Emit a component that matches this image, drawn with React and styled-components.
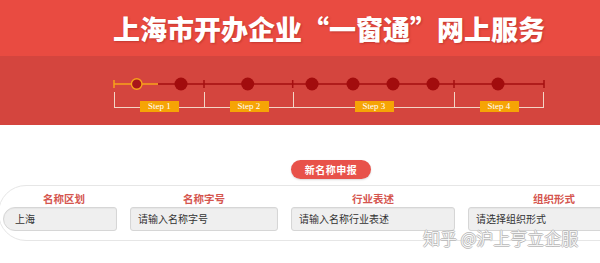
import React from "react";
import styled, { createGlobalStyle } from "styled-components";

const GlobalStyle = createGlobalStyle`
  html, body {
    margin: 0;
    padding: 0;
    background: #fff;
    overflow: hidden;
  }
  body {
    width: 600px;
    font-family: "Noto Sans CJK SC", "Noto Sans", sans-serif;
  }
`;

const Page = styled.div`
  width: 600px;
  height: 263px;
  overflow: hidden;
`;

const TitleBar = styled.div`
  height: 56px;
  background: #e94b41;
  display: flex;
  align-items: center;
  padding-left: 113px;
  box-sizing: border-box;
`;

const Title = styled.h1`
  margin: 0;
  font-size: 27px;
  line-height: 1;
  font-weight: 900;
  color: #fff;
  white-space: nowrap;
  text-shadow: 1px 1px 2px rgba(120, 20, 15, 0.35);
`;

const ProgressBar = styled.div`
  height: 69px;
  background: #d4453e;
  padding: 20px 0 0 113px;
  box-sizing: border-box;
`;

const Track = styled.svg`
  display: block;
`;

const Steps = styled.div`
  display: flex;
  margin-left: 1px;
  height: 16px;
`;

const Segment = styled.div`
  width: ${(p) => p.$w}px;
  box-sizing: border-box;
  border-left: 1px solid #f4d5c6;
  border-bottom: 1px solid #f4d5c6;
  border-right: ${(p) => (p.$last ? "1px solid #f4d5c6" : "none")};
  display: flex;
  justify-content: center;
  align-items: flex-end;
`;

const StepTag = styled.span`
  width: 39px;
  height: 11px;
  margin-bottom: -5px;
  background: #f6a405;
  color: #fff;
  font-family: "Liberation Serif", serif;
  font-size: 9px;
  line-height: 11px;
  text-align: center;
`;

const Main = styled.div`
  position: relative;
  padding-top: 35px;
`;

const PillRow = styled.div`
  display: flex;
  padding-left: 291px;
`;

const Pill = styled.div`
  width: 80px;
  height: 19px;
  border-radius: 10px;
  background: #e8524a;
  color: #fff;
  font-size: 10px;
  font-weight: 700;
  line-height: 19px;
  text-align: center;
  letter-spacing: 0.5px;
  box-shadow: 0 1px 2px rgba(0, 0, 0, 0.15);
`;

const FormCard = styled.div`
  margin: 6px 0 0 -2px;
  width: 680px;
  box-sizing: border-box;
  border: 1px solid #e6e6e6;
  border-radius: 28px;
  padding: 6px 0 9px 4px;
`;

const Fields = styled.div`
  display: grid;
  grid-template-columns: 114px 148px 164px 172px;
  column-gap: 13px;
`;

const Field = styled.div`
  display: flex;
  flex-direction: column;
  align-items: center;
  gap: 1px;
`;

const Label = styled.div`
  height: 14px;
  line-height: 14px;
  font-size: 10.5px;
  font-weight: 700;
  color: #d5564f;
  padding-left: ${(p) => (p.$first ? "8px" : "0")};
`;

const Input = styled.div`
  width: 100%;
  height: 24px;
  box-sizing: border-box;
  border: 1px solid #d6d6d6;
  border-radius: ${(p) => (p.$first ? "12px 3px 3px 12px" : "3px")};
  background: #efefef;
  color: #333;
  font-size: 10px;
  line-height: 22px;
  padding-left: ${(p) => (p.$first ? "11px" : "7px")};
  white-space: nowrap;
  box-shadow: inset 0 1px 1px rgba(0, 0, 0, 0.04);
`;

const Watermark = styled.div`
  position: absolute;
  left: 423px;
  top: 104px;
  font-size: 17px;
  font-weight: 300;
  line-height: 1;
  color: #fff;
  white-space: nowrap;
  text-shadow: 1px 0 0 #b8b8b8, -1px 0 0 #b8b8b8, 0 1px 0 #b8b8b8, 0 -1px 0 #b8b8b8;
`;

const segments = [
  { w: 90, label: "Step 1" },
  { w: 89, label: "Step 2" },
  { w: 161, label: "Step 3" },
  { w: 90, label: "Step 4" },
];

const dots = [68, 134.7, 199, 240, 280, 320, 385];
const ticks = [91, 179.7, 341, 431];

const fields = [
  { label: "名称区划", value: "上海" },
  { label: "名称字号", value: "请输入名称字号" },
  { label: "行业表述", value: "请输入名称行业表述" },
  { label: "组织形式", value: "请选择组织形式" },
];

export default function App() {
  return (
    <Page>
      <GlobalStyle />
      <TitleBar>
        <Title>上海市开办企业“一窗通”网上服务</Title>
      </TitleBar>
      <ProgressBar>
        <Track width="434" height="16" viewBox="0 0 434 16">
          <line x1="45" y1="8" x2="431" y2="8" stroke="#a50f10" strokeWidth="1.5" />
          <line x1="1" y1="8" x2="45" y2="8" stroke="#f7a21b" strokeWidth="1.5" />
          <line x1="1" y1="4" x2="1" y2="12" stroke="#f7a21b" strokeWidth="1.5" />
          <circle cx="23.7" cy="8" r="5.3" fill="#a9151a" stroke="#f7a21b" strokeWidth="1.4" />
          {ticks.map((x) => (
            <line key={x} x1={x} y1="4" x2={x} y2="12" stroke="#a50f10" strokeWidth="1.5" />
          ))}
          {dots.map((x) => (
            <circle key={x} cx={x} cy="8" r="6.5" fill="#a20c0d" />
          ))}
        </Track>
        <Steps>
          {segments.map((s, i) => (
            <Segment key={s.label} $w={s.w} $last={i === segments.length - 1}>
              <StepTag>{s.label}</StepTag>
            </Segment>
          ))}
        </Steps>
      </ProgressBar>
      <Main>
        <PillRow>
          <Pill>新名称申报</Pill>
        </PillRow>
        <FormCard>
          <Fields>
            {fields.map((f, i) => (
              <Field key={f.label}>
                <Label $first={i === 0}>{f.label}</Label>
                <Input $first={i === 0}>{f.value}</Input>
              </Field>
            ))}
          </Fields>
        </FormCard>
        <Watermark>知乎 @沪上亨立企服</Watermark>
      </Main>
    </Page>
  );
}
